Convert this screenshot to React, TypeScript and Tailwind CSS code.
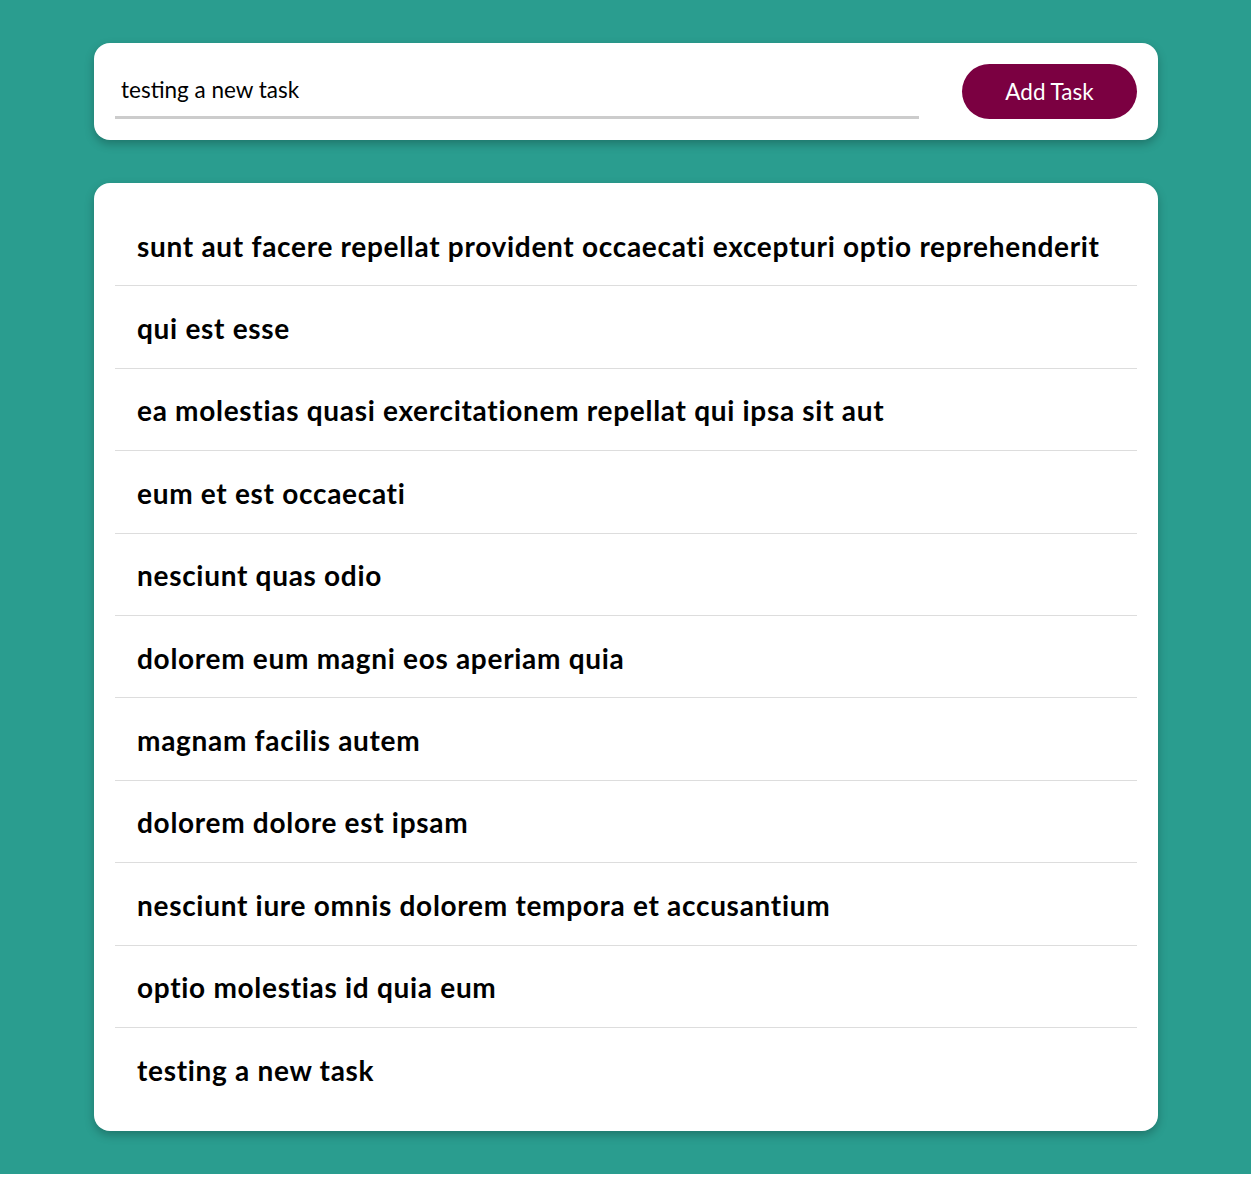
const tasks = [
  "sunt aut facere repellat provident occaecati excepturi optio reprehenderit",
  "qui est esse",
  "ea molestias quasi exercitationem repellat qui ipsa sit aut",
  "eum et est occaecati",
  "nesciunt quas odio",
  "dolorem eum magni eos aperiam quia",
  "magnam facilis autem",
  "dolorem dolore est ipsam",
  "nesciunt iure omnis dolorem tempora et accusantium",
  "optio molestias id quia eum",
  "testing a new task",
]

export default function App() {
  return (
    <div className="w-[1251px] h-[1174px] bg-[#2a9d8f] px-[94px] py-[43px] flex flex-col gap-[43px] font-['Lato',sans-serif]">
      {/* Add task form */}
      <div className="w-[1064px] bg-white rounded-[16px] shadow-[0_4px_10px_rgba(0,0,0,0.25)] p-[21px] flex items-center gap-[43px]">
        <div className="flex-1 h-[55px] border-b-[3px] border-[#cccccc] flex items-center pl-[6px] pb-[1px]">
          <span className="text-[22.5px] text-black">testing a new task</span>
        </div>
        <button className="w-[175px] h-[55px] rounded-full bg-[#7b0041] text-white text-[22.5px]">
          Add Task
        </button>
      </div>

      {/* Task list */}
      <div className="w-[1064px] bg-white rounded-[16px] shadow-[0_4px_10px_rgba(0,0,0,0.25)] p-[21px]">
        <ul>
          {tasks.map((t, i) => (
            <li
              key={i}
              className={`h-[82.4px] flex items-center pl-[22px] pt-[2px] text-[28px] tracking-[0.7px] font-bold text-black ${
                i < tasks.length - 1 ? "border-b border-[#dddddd]" : ""
              }`}
            >
              {t}
            </li>
          ))}
        </ul>
      </div>
    </div>
  )
}
